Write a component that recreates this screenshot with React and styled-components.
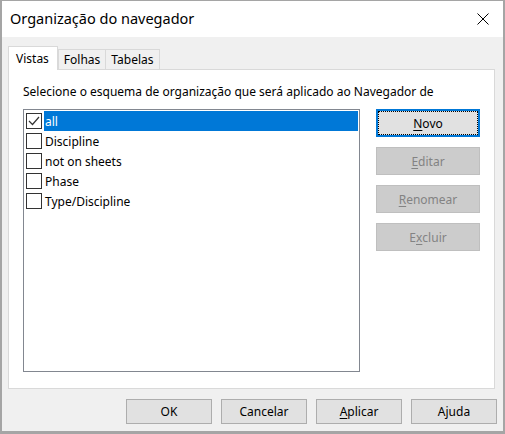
import React from "react";
import styled, { createGlobalStyle } from "styled-components";

const Global = createGlobalStyle`
  html, body { margin: 0; padding: 0; background: #f0f0f0; }
  body { font-family: "Noto Sans", "Open Sans", sans-serif; font-size: 12px; color: #000; }
  * { box-sizing: border-box; }
`;

const Window = styled.div`
  width: 505px;
  height: 434px;
  display: flex;
  flex-direction: column;
  border-style: solid;
  border-color: #a5a5a5;
  border-width: 1px 2px 3px 2px;
  background: #f0f0f0;
  overflow: hidden;
`;

const TitleBar = styled.div`
  height: 36px;
  flex: none;
  background: #fff;
  display: flex;
  align-items: center;
  justify-content: space-between;
  padding: 0 14px 2px 8px;
`;

const Title = styled.div`
  font-size: 14.5px;
  color: #000;
`;

const CloseIcon = styled.svg`
  width: 12px;
  height: 12px;
  display: block;
  margin-top: 2px;
`;

const Body = styled.div`
  flex: 1;
  display: flex;
  flex-direction: column;
  padding: 9px 8px 7px 6px;
  min-height: 0;
`;

const TabStrip = styled.div`
  display: flex;
  align-items: flex-end;
  height: 23px;
  flex: none;
`;

const Tab = styled.div`
  display: flex;
  align-items: center;
  border: 1px solid #d9d9d9;
  border-bottom: none;
  white-space: nowrap;
  position: relative;
  ${(p) =>
    p.$active
      ? `
    height: 24px;
    margin-bottom: -1px;
    background: #fff;
    padding: 0 8px 1px 7px;
    z-index: 1;
  `
      : `
    height: 20px;
    background: #f0f0f0;
    padding: 0 5px 0 5px;
    margin-left: ${p.$first ? "0" : "-1px"};
  `}
`;

const Panel = styled.div`
  flex: 1;
  min-height: 0;
  background: #fff;
  border: 1px solid #d9d9d9;
  display: flex;
  flex-direction: column;
  padding: 14px 14px 16px 14px;
`;

const Description = styled.div`
  line-height: 16px;
  height: 16px;
  white-space: nowrap;
  margin-bottom: 9px;
`;

const ContentRow = styled.div`
  flex: 1;
  min-height: 0;
  display: flex;
  gap: 16px;
`;

const ListBox = styled.div`
  flex: 1;
  border: 1px solid #828790;
  background: #fff;
  padding: 1px 1px 1px 2px;
`;

const ListRow = styled.div`
  height: 20px;
  display: flex;
  align-items: center;
`;

const CheckBox = styled.span`
  width: 16px;
  height: 16px;
  flex: none;
  border: 1px solid #333;
  background: #fff;
  display: flex;
  align-items: center;
  justify-content: center;
`;

const Label = styled.span`
  flex: 1;
  height: 20px;
  line-height: 20px;
  margin-left: 2px;
  padding: 1px 0 0 1px;
  white-space: nowrap;
  background: ${(p) => (p.$selected ? "#0078d7" : "transparent")};
  color: ${(p) => (p.$selected ? "#fff" : "#000")};
`;

const ButtonColumn = styled.div`
  width: 104px;
  flex: none;
  display: flex;
  flex-direction: column;
  gap: 10px;
`;

const Button = styled.button`
  font-family: inherit;
  font-size: 12px;
  padding: 0;
  margin: 0;
  display: flex;
  align-items: center;
  justify-content: center;
  height: ${(p) => p.$h || 28}px;
  width: ${(p) => (p.$w ? `${p.$w}px` : "100%")};
  background: ${(p) => (p.disabled ? "#cccccc" : "#e1e1e1")};
  color: ${(p) => (p.disabled ? "#838383" : "#000")};
  border: ${(p) =>
    p.$default ? "2px solid #0078d7" : p.disabled ? "1px solid #bfbfbf" : "1px solid #adadad"};
  outline: ${(p) => (p.$default ? "1px dotted #000" : "none")};
  outline-offset: -3px;
  cursor: default;
  u { text-decoration: underline; text-underline-offset: 2px; }
`;

const BottomBar = styled.div`
  flex: none;
  display: flex;
  justify-content: flex-end;
  gap: 9px;
  margin: 10px -2px 0 0;
`;

const items = ["all", "Discipline", "not on sheets", "Phase", "Type/Discipline"];

export default function App() {
  return (
    <>
      <Global />
      <Window>
        <TitleBar>
          <Title>Organização do navegador</Title>
          <CloseIcon viewBox="0 0 12 12">
            <path d="M0.5 0.5 L11.5 11.5 M11.5 0.5 L0.5 11.5" stroke="#000" strokeWidth="1" fill="none" />
          </CloseIcon>
        </TitleBar>
        <Body>
          <TabStrip>
            <Tab $active>Vistas</Tab>
            <Tab $first>Folhas</Tab>
            <Tab>Tabelas</Tab>
          </TabStrip>
          <Panel>
            <Description>Selecione o esquema de organização que será aplicado ao Navegador de</Description>
            <ContentRow>
              <ListBox>
                {items.map((it, i) => (
                  <ListRow key={it}>
                    <CheckBox>
                      {i === 0 && (
                        <svg width="14" height="14" viewBox="0 0 14 14">
                          <polyline points="2,7 5.5,10.5 12,3" fill="none" stroke="#333" strokeWidth="1.2" />
                        </svg>
                      )}
                    </CheckBox>
                    <Label $selected={i === 0}>{it}</Label>
                  </ListRow>
                ))}
              </ListBox>
              <ButtonColumn>
                <Button $default><u>N</u>ovo</Button>
                <Button disabled><u>E</u>ditar</Button>
                <Button disabled><u>R</u>enomear</Button>
                <Button disabled>E<u>x</u>cluir</Button>
              </ButtonColumn>
            </ContentRow>
          </Panel>
          <BottomBar>
            <Button $w={86} $h={25}>OK</Button>
            <Button $w={86} $h={25}>Cancelar</Button>
            <Button $w={86} $h={25}><u>A</u>plicar</Button>
            <Button $w={86} $h={25}>Ajuda</Button>
          </BottomBar>
        </Body>
      </Window>
    </>
  );
}
